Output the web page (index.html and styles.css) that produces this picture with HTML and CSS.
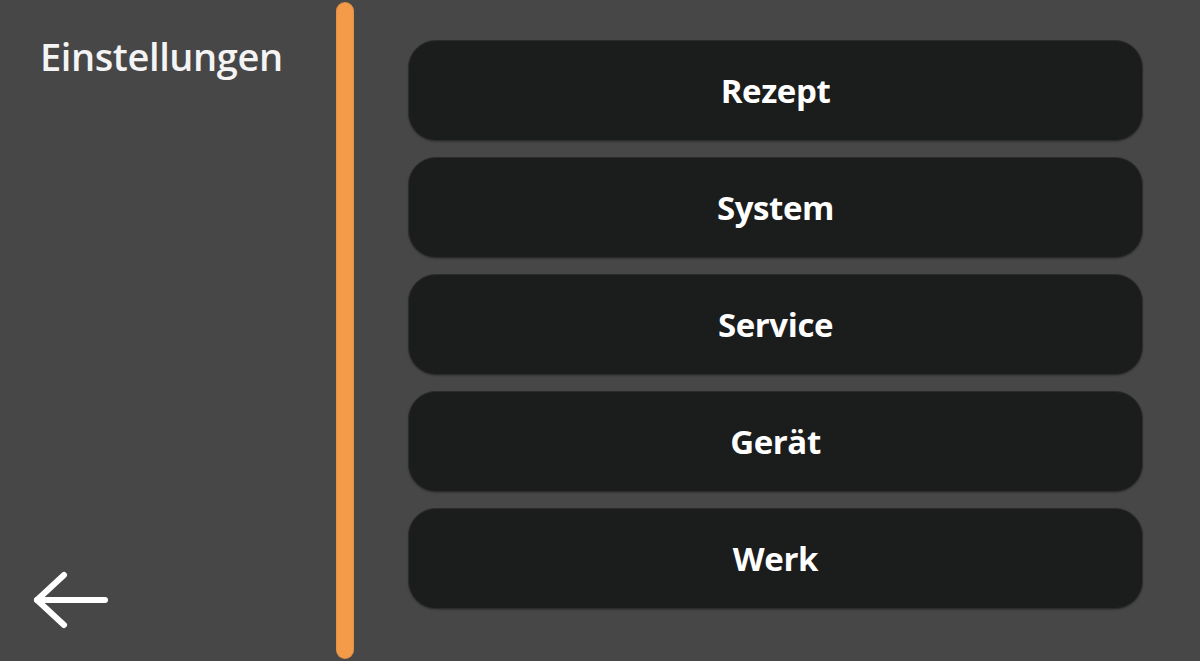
FILE: index.html
```html
<!DOCTYPE html>
<html lang="de">
<head>
<meta charset="utf-8">
<link rel="stylesheet" href="styles.css">
</head>
<body>
<div class="screen">
  <aside class="side">
    <h1 class="title">Einstellungen</h1>
    <button class="back" aria-label="Zurück">
      <svg width="76" height="60" viewBox="0 0 76 60" fill="none" stroke="#ffffff" stroke-width="6" stroke-linecap="round" stroke-linejoin="round">
        <path d="M4 30 H72"/>
        <path d="M31 5 L4 30 L31 55"/>
      </svg>
    </button>
  </aside>
  <div class="divider"></div>
  <main class="menu">
    <button class="item">Rezept</button>
    <button class="item">System</button>
    <button class="item">Service</button>
    <button class="item">Gerät</button>
    <button class="item">Werk</button>
  </main>
</div>
</body>
</html>
```
FILE: styles.css
```css
* { box-sizing: border-box; }
html, body {
  margin: 0;
  padding: 0;
  width: 1200px;
  height: 661px;
  overflow: hidden;
  background: #474747;
  font-family: "Open Sans", "Noto Sans", sans-serif;
}
.screen {
  display: flex;
  height: 661px;
}
.side {
  width: 336px;
  display: flex;
  flex-direction: column;
  justify-content: space-between;
  padding: 32px 0 31px 40px;
}
.title {
  margin: 0;
  color: #f4f4f4;
  font-size: 38px;
  font-weight: 600;
  line-height: 48px;
  letter-spacing: -0.4px;
}
.back {
  background: none;
  border: 0;
  padding: 0;
  width: 76px;
  height: 60px;
  margin-left: -7px;
  display: block;
}
.back svg { display: block; }
.divider {
  width: 18px;
  margin: 2px 0;
  background: #f49b4a;
  border-radius: 9px;
  box-shadow: inset 0 0 2px rgba(0,0,0,0.2);
}
.menu {
  flex: 1;
  display: flex;
  flex-direction: column;
  gap: 16px;
  padding: 40px 57px 0 54px;
}
.item {
  height: 101px;
  border: 1px solid #2c2c2c;
  border-radius: 28px;
  background: #1b1c1c;
  color: #ffffff;
  font-family: "Open Sans", "Noto Sans", sans-serif;
  font-size: 33px;
  font-weight: 700;
  letter-spacing: -0.4px;
  box-shadow: 0 1px 2px rgba(0,0,0,0.25);
}
```
